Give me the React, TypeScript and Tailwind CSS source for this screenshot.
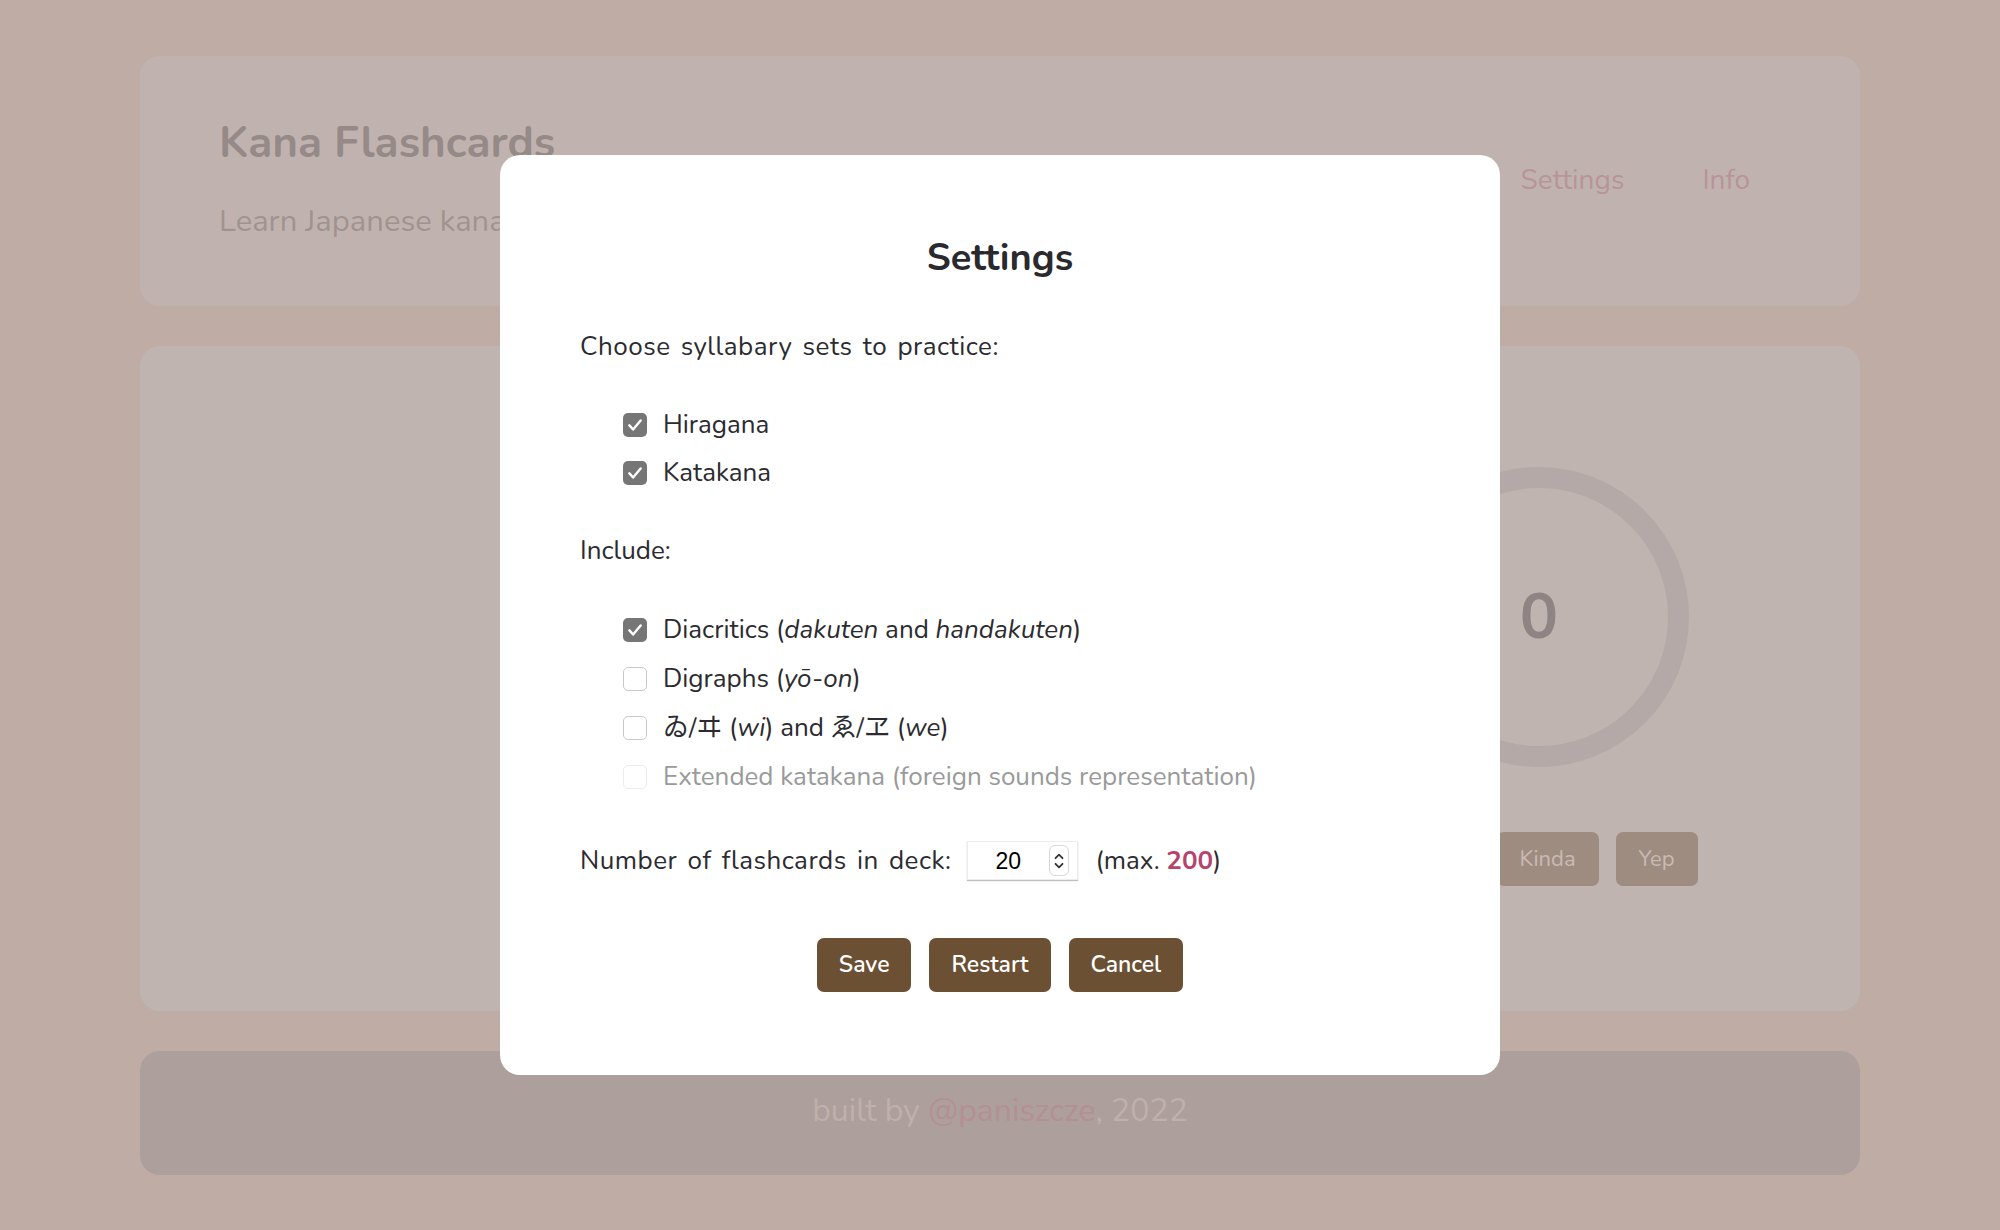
import React from "react";

const FONT = { fontFamily: '"Nunito", "Lato", "Noto Sans CJK JP", sans-serif' };

function Check({ checked, disabled }: { checked?: boolean; disabled?: boolean }) {
  if (checked) {
    return (
      <span className="flex h-6 w-6 shrink-0 items-center justify-center rounded-[5px] bg-[#767676]">
        <svg viewBox="0 0 24 24" className="h-[18px] w-[18px]" fill="none">
          <path d="M4.5 12.5l5 5.5 10-12" stroke="white" strokeWidth="3.2" strokeLinecap="round" strokeLinejoin="round" />
        </svg>
      </span>
    );
  }
  return (
    <span
      className={
        "h-6 w-6 shrink-0 rounded-[5px] border bg-white " +
        (disabled ? "border-[#ececec]" : "border-[#c9c9c9]")
      }
    />
  );
}

function Row({
  checked,
  disabled,
  children,
}: {
  checked?: boolean;
  disabled?: boolean;
  children: React.ReactNode;
}) {
  return (
    <label className="flex h-9 items-center gap-4 pl-[43px]">
      <Check checked={checked} disabled={disabled} />
      <span className={disabled ? "text-[#9a9a9a]" : ""}>{children}</span>
    </label>
  );
}

function Spinner() {
  return (
    <span className="flex h-[31px] w-[20px] flex-col items-center justify-center rounded-[6px] border border-[#d8d8d8] bg-white">
      <svg viewBox="0 0 10 16" className="h-[24px] w-[14px]" fill="none">
        <path d="M2.5 6l2.5-2.5L7.5 6" stroke="#333" strokeWidth="1.3" strokeLinecap="round" strokeLinejoin="round" />
        <path d="M2.5 10l2.5 2.5L7.5 10" stroke="#333" strokeWidth="1.3" strokeLinecap="round" strokeLinejoin="round" />
      </svg>
    </span>
  );
}

function SettingsModal() {
  return (
    <div className="fixed inset-0 flex items-center justify-center">
      <div className="w-[1000px] rounded-[20px] bg-white px-[80px] pb-[83px] pt-[79px] text-[26px] leading-9 text-[#2c2b30]">
        <h2 className="text-center text-[38px] font-bold leading-[48px] text-[#2a292e]">Settings</h2>

        <p className="mt-[47px] tracking-[0.5px] [word-spacing:3px]">Choose syllabary sets to practice:</p>
        <div className="mt-[42px] flex flex-col gap-3">
          <Row checked>Hiragana</Row>
          <Row checked>Katakana</Row>
        </div>

        <p className="mt-[42px]">Include:</p>
        <div className="mt-[43px] flex flex-col gap-[13px]">
          <Row checked>
            Diacritics (<i>dakuten</i> and <i>handakuten</i>)
          </Row>
          <Row>
            Digraphs (<i>yō-on</i>)
          </Row>
          <Row>
            ゐ/ヰ (<i>wi</i>) and ゑ/ヱ (<i>we</i>)
          </Row>
          <Row disabled>Extended katakana (foreign sounds representation)</Row>
        </div>

        <div className="mt-[46px] flex h-[39px] items-center">
          <span className="tracking-[0.5px] [word-spacing:3px]">Number of flashcards in deck:</span>
          <div className="ml-[16px] flex h-[39px] w-[111px] items-center justify-between border border-[#ededed] bg-white pl-[27px] pr-[8px] shadow-[0_1px_1px_rgba(0,0,0,0.25)]">
            <span className="text-[23px] text-black" style={{ fontFamily: '"Liberation Sans", Arial, sans-serif' }}>
              20
            </span>
            <Spinner />
          </div>
          <span className="ml-[17px]">
            (max. <b className="font-bold text-[#b5436c]">200</b>)
          </span>
        </div>

        <div className="mt-[58px] flex justify-center gap-[18px]">
          {["Save", "Restart", "Cancel"].map((l) => (
            <button
              key={l}
              type="button"
              className="h-[54px] rounded-[7px] bg-[#6b5034] px-[22px] text-[23px] font-semibold text-white"
            >
              {l}
            </button>
          ))}
        </div>
      </div>
    </div>
  );
}

export default function App() {
  return (
    <div className="min-h-[1230px] bg-[#bfaca5]" style={FONT}>
      <div className="mx-auto flex w-[1720px] flex-col gap-10 pt-[56px]">
        <header className="flex h-[250px] items-start justify-between rounded-[20px] bg-[#c0b3af] pl-[79px] pr-[110px] pt-[59px]">
          <div>
            <h1 className="text-[44px] font-bold leading-[56px] text-[#958a88]">Kana Flashcards</h1>
            <p className="mt-[30px] text-[31px] leading-10 text-[#a0938f]">
              Learn Japanese kana with flashcards
            </p>
          </div>
          <nav className="mt-[45px] flex gap-[78px] text-[28px] leading-10 text-[#b8939a]">
            <span>Settings</span>
            <span>Info</span>
          </nav>
        </header>

        <main className="flex h-[665px] justify-end rounded-[20px] bg-[#c0b4b1] pr-[121px] pt-[121px]">
          <div className="flex w-[400px] flex-col items-center">
            <div className="flex h-[300px] w-[300px] items-center justify-center rounded-full border-[21px] border-[#b4a9a7]">
              <span className="text-[64px] font-bold text-[#8e8483]">0</span>
            </div>
            <div className="mt-[65px] flex gap-[17px]">
              {["Nope", "Kinda", "Yep"].map((l) => (
                <button
                  key={l}
                  type="button"
                  className="h-[54px] rounded-[7px] bg-[#9e8c81] px-[23px] text-[22px] text-[#c9bab4]"
                >
                  {l}
                </button>
              ))}
            </div>
          </div>
        </main>

        <footer className="flex h-[124px] items-center justify-center rounded-[20px] bg-[#ad9f9b] pb-1 text-[32px] text-[#bfb0ab]">
          <span>
            built by <span className="text-[#b48f95]">@paniszcze</span>, 2022
          </span>
        </footer>
      </div>
      <SettingsModal />
    </div>
  );
}
